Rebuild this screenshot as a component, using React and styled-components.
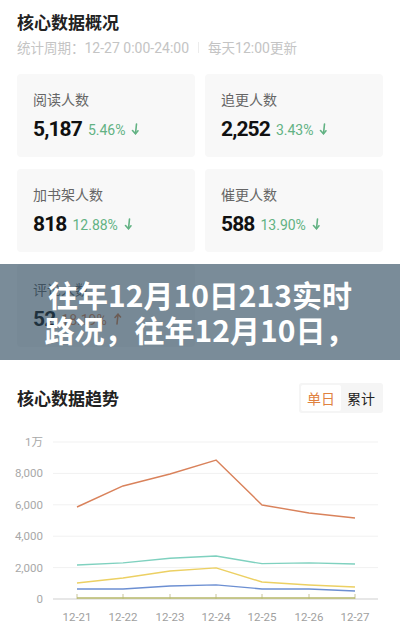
import styled, { createGlobalStyle } from 'styled-components';

const GlobalStyle = createGlobalStyle`
  html, body {
    margin: 0;
    padding: 0;
    background: #fff;
  }
  body {
    font-family: "Noto Sans CJK SC", "Noto Sans", sans-serif;
    width: 400px;
    overflow: hidden;
  }
`;

const Page = styled.div`
  position: relative;
  width: 400px;
  height: 624px;
  overflow: hidden;
  background: #fff;
`;

const Section = styled.section`
  padding: 0 17px;
`;

const Title = styled.h2`
  margin: 0;
  padding-top: ${(p) => p.$top || 0}px;
  font-size: 17px;
  line-height: 24px;
  font-weight: 700;
  color: #222;
`;

const Sub = styled.div`
  margin-top: 3px;
  font-size: 13.5px;
  line-height: 20px;
  color: #c4c4c4;
  display: flex;
  align-items: center;
  gap: 9px;
`;

const SubNum = styled.span`
  font-family: Roboto, "Noto Sans", sans-serif;
  font-size: 14px;
`;

const Sep = styled.span`
  width: 1px;
  height: 11px;
  background: #ececec;
`;

const Grid = styled.div`
  margin-top: 16px;
  display: grid;
  grid-template-columns: 1fr 1fr;
  column-gap: 10px;
  row-gap: 12px;
`;

const Card = styled.div`
  height: 83px;
  box-sizing: border-box;
  padding: 15px 16px 0;
  background: #f8f8f8;
  border-radius: 4px;
`;

const Label = styled.div`
  font-size: 14px;
  line-height: 20px;
  color: #666;
`;

const ValueRow = styled.div`
  margin-top: 6px;
  display: flex;
  align-items: center;
  height: 28px;
`;

const Value = styled.span`
  font-family: Roboto, "Noto Sans", sans-serif;
  font-size: 21px;
  font-weight: 700;
  color: #111;
  letter-spacing: -0.9px;
  margin-right: 6px;
`;

const Rate = styled.span`
  font-family: Roboto, "Noto Sans", sans-serif;
  font-size: 14px;
  color: ${(p) => (p.$up ? '#d9824c' : '#62b283')};
  margin-right: 6px;
  padding-top: 2px;
`;

const Banner = styled.div`
  position: absolute;
  left: 0;
  right: 0;
  top: 264px;
  height: 96px;
  box-sizing: border-box;
  padding: 13px 0 0;
  background: rgba(40, 70, 90, 0.62);
  color: #fff;
  font-size: 30px;
  line-height: 35px;
  font-weight: 700;
  text-align: center;
  white-space: nowrap;
  overflow: hidden;
`;

const Header = styled.div`
  margin-top: 36px;
  display: flex;
  justify-content: space-between;
  align-items: center;
`;

const Toggle = styled.div`
  display: flex;
  padding: 2px;
  background: #f5f5f5;
  border-radius: 3px;
`;

const ToggleItem = styled.span`
  width: 40px;
  height: 26px;
  display: flex;
  align-items: center;
  justify-content: center;
  font-size: 14px;
  border-radius: 2px;
  background: ${(p) => (p.$active ? '#fff' : 'transparent')};
  color: ${(p) => (p.$active ? '#e0823f' : '#222')};
`;

const ChartBox = styled.div`
  margin: 12px -17px 0;
`;

const Arrow = ({ up }) => (
  <svg width="9" height="12" viewBox="0 0 9 12">
    {up ? (
      <g fill="none" stroke="#d9824c" strokeWidth="1.6" strokeLinecap="round">
        <path d="M4 11 Q4.5 6 5 1.5" />
        <path d="M2 4.5 L5 1.2 L7.5 4" />
      </g>
    ) : (
      <g fill="none" stroke="#62b283" strokeWidth="1.6" strokeLinecap="round">
        <path d="M5.5 1 Q5 6 4.5 10.5" />
        <path d="M1.5 7.5 L4.5 10.8 L7 7.8" />
      </g>
    )}
  </svg>
);

const stats = [
  { label: '阅读人数', value: '5,187', rate: '5.46%' },
  { label: '追更人数', value: '2,252', rate: '3.43%' },
  { label: '加书架人数', value: '818', rate: '12.88%' },
  { label: '催更人数', value: '588', rate: '13.90%' },
  { label: '评论人数', value: '52', rate: '18.19%', up: true },
];

const xs = [77, 123, 170, 216, 262, 309, 355];
const y0 = 598;
const k = 15.7 / 1000;
const series = [
  { color: '#d9825b', data: [5860, 7200, 7960, 8850, 5990, 5480, 5160] },
  { color: '#7fd1bf', data: [2170, 2300, 2600, 2740, 2250, 2300, 2230] },
  { color: '#ecd063', data: [1020, 1340, 1780, 1980, 1080, 890, 760] },
  { color: '#6c8fd2', data: [640, 640, 830, 900, 640, 640, 510] },
  { color: '#b7b86a', data: [60, 60, 60, 60, 60, 60, 60] },
];
const yTicks = [
  { v: 10000, t: '1万' },
  { v: 8000, t: '8,000' },
  { v: 6000, t: '6,000' },
  { v: 4000, t: '4,000' },
  { v: 2000, t: '2,000' },
  { v: 0, t: '0' },
];
const dates = ['12-21', '12-22', '12-23', '12-24', '12-25', '12-26', '12-27'];

const Chart = () => (
  <svg width="400" height="200" viewBox="0 424 400 200" style={{ display: 'block' }}>
    {yTicks.map((t) => {
      const y = y0 - t.v * k;
      return (
        <g key={t.t}>
          {t.v > 0 && <line x1="53" x2="378" y1={y} y2={y} stroke="#f1f1f1" strokeWidth="1" />}
          <text
            x="43"
            y={y + 4}
            textAnchor="end"
            fontSize="11.5"
            fill="#a8a8a8"
            fontFamily="Roboto, 'Noto Sans CJK SC', sans-serif"
          >
            {t.t}
          </text>
        </g>
      );
    })}
    <line x1="53" x2="378" y1={y0} y2={y0} stroke="#cfcfcf" strokeWidth="1" />
    {xs.map((x) => (
      <line key={x} x1={x} x2={x} y1={y0 - 5} y2={y0} stroke="#c8c49a" strokeWidth="1" />
    ))}
    {series.map((s) => (
      <polyline
        key={s.color}
        fill="none"
        stroke={s.color}
        strokeWidth="1.4"
        strokeLinejoin="round"
        points={s.data.map((v, i) => `${xs[i]},${y0 - v * k}`).join(' ')}
      />
    ))}
    {dates.map((d, i) => (
      <text
        key={d}
        x={xs[i]}
        y="620"
        textAnchor="middle"
        fontSize="11.5"
        fill="#a0a0a0"
        fontFamily="Roboto, sans-serif"
      >
        {d}
      </text>
    ))}
  </svg>
);

export default function App() {
  return (
    <Page>
      <GlobalStyle />
      <Section>
        <Title $top={10}>核心数据概况</Title>
        <Sub>
          <span>
            统计周期：<SubNum>12-27 0:00-24:00</SubNum>
          </span>
          <Sep />
          <span>
            每天<SubNum>12:00</SubNum>更新
          </span>
        </Sub>
        <Grid>
          {stats.map((s) => (
            <Card key={s.label}>
              <Label>{s.label}</Label>
              <ValueRow>
                <Value>{s.value}</Value>
                <Rate $up={s.up}>{s.rate}</Rate>
                <Arrow up={s.up} />
              </ValueRow>
            </Card>
          ))}
        </Grid>
        <Header>
          <Title>核心数据趋势</Title>
          <Toggle>
            <ToggleItem $active>单日</ToggleItem>
            <ToggleItem>累计</ToggleItem>
          </Toggle>
        </Header>
        <ChartBox>
          <Chart />
        </ChartBox>
      </Section>
      <Banner>
        往年12月10日213实时
        <br />
        路况，往年12月10日，
      </Banner>
    </Page>
  );
}
